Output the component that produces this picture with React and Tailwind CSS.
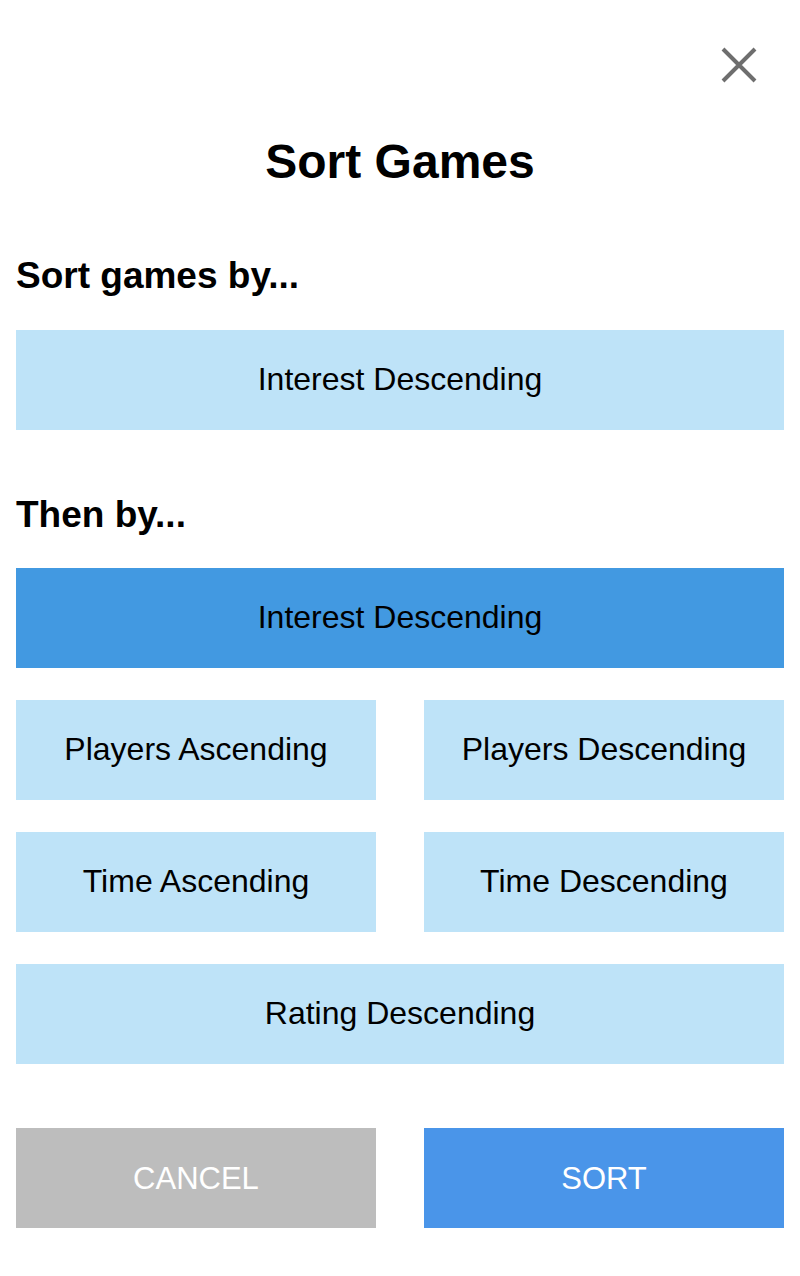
const options = [
  "Players Ascending",
  "Players Descending",
  "Time Ascending",
  "Time Descending",
];

function Option({ children, selected, wide }) {
  return (
    <button
      className={
        "h-[100px] w-full flex items-center justify-center pb-[2px] text-[32px] text-black " +
        (selected ? "bg-[#4299e1]" : "bg-[#bee3f8]") +
        (wide ? " col-span-2" : "")
      }
    >
      {children}
    </button>
  );
}

function CloseIcon() {
  return (
    <svg width="36" height="36" viewBox="0 0 36 36" className="mr-[27px]">
      <path d="M2 2 L34 34 M34 2 L2 34" stroke="#6e6e6e" strokeWidth="4" fill="none" />
    </svg>
  );
}

export default function App() {
  return (
    <div
      className="w-[800px] min-h-[1276px] bg-white px-4 pb-12"
      style={{ fontFamily: '"Liberation Sans", Arial, sans-serif' }}
    >
      <div className="flex justify-end pt-[47px]">
        <CloseIcon />
      </div>
      <h1 className="mt-[51px] text-center text-[48px] leading-[56px] font-bold text-black">
        Sort Games
      </h1>
      <h2 className="mt-[64px] text-[37px] leading-[44px] font-bold text-black">
        Sort games by...
      </h2>
      <div className="mt-8">
        <Option>Interest Descending</Option>
      </div>
      <h2 className="mt-[63px] text-[37px] leading-[44px] font-bold text-black">
        Then by...
      </h2>
      <div className="mt-[31px] grid grid-cols-2 gap-x-12 gap-y-8">
        <Option selected wide>
          Interest Descending
        </Option>
        {options.map((o) => (
          <Option key={o}>{o}</Option>
        ))}
        <Option wide>Rating Descending</Option>
      </div>
      <div className="mt-16 grid grid-cols-2 gap-x-12">
        <button className="h-[100px] bg-[#bdbdbd] text-white text-[31px] pt-[2px]">CANCEL</button>
        <button className="h-[100px] bg-[#4a95e9] text-white text-[31px] pt-[2px]">SORT</button>
      </div>
    </div>
  );
}
